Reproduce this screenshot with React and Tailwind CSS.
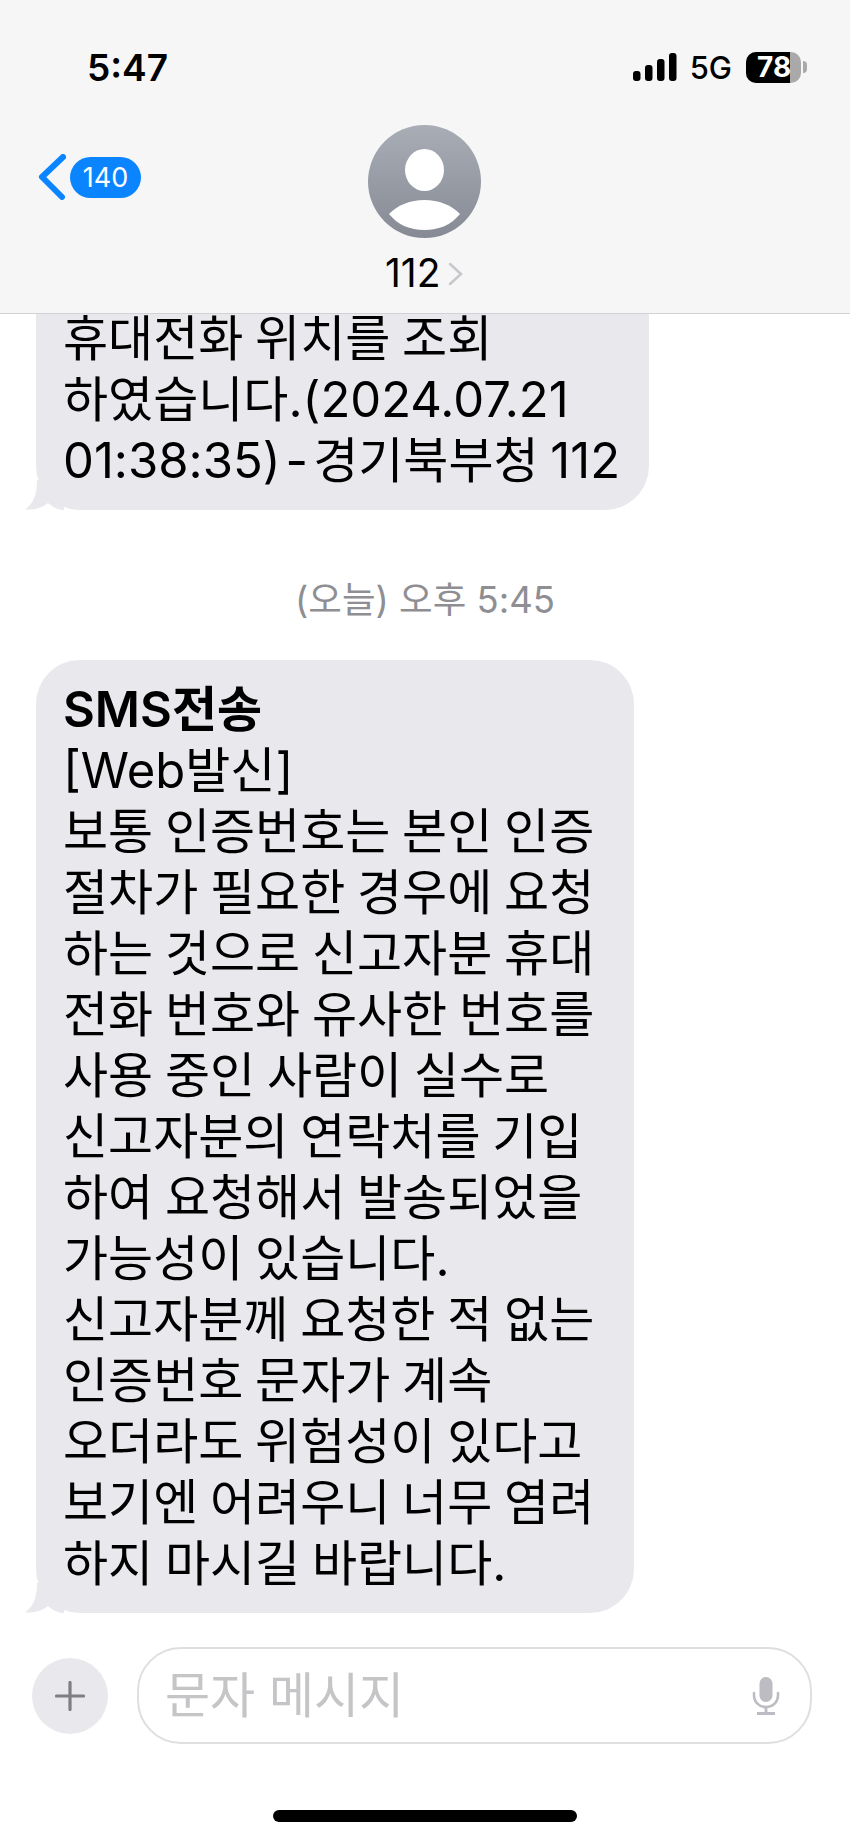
const font = { fontFamily: '"Inter","Noto Sans CJK KR",sans-serif' };

function Tail() {
  return (
    <svg className="absolute left-[-12px] bottom-0" width="40" height="30" viewBox="0 0 40 30">
      <path d="M13 0 C13 14 10 23 1 29.5 C10 30 18 28 24 23 C29 27 33 30 40 30 L40 0 Z" fill="#e9e8ec" />
    </svg>
  );
}

function Bubble({ lines, bold, width, className }) {
  return (
    <div className={`relative ml-[36px] bg-[#e9e8ec] rounded-[44px] pl-[27px] text-black text-[49px] leading-[61px] [word-spacing:-2px] ${width} ${className}`}>
      {bold && <div className="font-semibold whitespace-nowrap">{bold}</div>}
      {lines.map((l, i) => (
        <div key={i} className="whitespace-nowrap">{l}</div>
      ))}
      <Tail />
    </div>
  );
}

function Avatar() {
  return (
    <svg width="113" height="113" viewBox="0 0 113 113">
      <defs>
        <linearGradient id="av" x1="0" y1="0" x2="0" y2="1">
          <stop offset="0" stopColor="#a9adb6" />
          <stop offset="1" stopColor="#868a94" />
        </linearGradient>
      </defs>
      <circle cx="56.5" cy="56.5" r="56.5" fill="url(#av)" />
      <ellipse cx="56.5" cy="45" rx="19.5" ry="21" fill="#fff" />
      <path d="M21 89 C30 80 42 75 56.5 75 C71 75 83 80 92 89 C83 100 71 105 56.5 105 C42 105 30 100 21 89 Z" fill="#fff" />
    </svg>
  );
}

export default function App() {
  return (
    <div style={font} className="w-[850px] h-[1841px] bg-white flex flex-col overflow-hidden">
      <header className="relative h-[314px] shrink-0 bg-[#f6f6f6] border-b border-[#d2d2d4] z-10">
        <div className="flex items-center justify-between h-[134px] pl-[87px] pr-[43px]">
          <span className="text-[37px] font-semibold text-black leading-none">5:47</span>
          <div className="flex items-center">
            <svg width="44" height="28" viewBox="0 0 44 28" fill="#000">
              <rect x="0" y="18" width="7.5" height="10" rx="3" />
              <rect x="12" y="12" width="7.5" height="16" rx="3" />
              <rect x="24" y="6" width="7.5" height="22" rx="3" />
              <rect x="36" y="0" width="7.5" height="28" rx="3" />
            </svg>
            <span className="ml-[13px] text-[31px] font-medium text-black leading-none">5G</span>
            <div className="relative ml-[14px] w-[55px] h-[31px] rounded-[10px] overflow-hidden bg-[#a9a9a9]">
              <div className="h-full w-[44px] bg-black" />
              <span className="absolute left-[11px] top-0 h-full flex items-center text-[28px] font-bold text-white leading-none">78</span>
            </div>
            <div className="ml-[2px] w-[4px] h-[12px] rounded-r-full bg-[#a9a9a9]" />
          </div>
        </div>
        <div className="absolute left-[38px] top-[154px] flex items-center">
          <svg width="28" height="46" viewBox="0 0 28 46" fill="none" stroke="#0a84ff" strokeWidth="6" strokeLinecap="round" strokeLinejoin="round">
            <path d="M25 3 L4 23 L24 43" />
          </svg>
          <div className="ml-[4px] w-[71px] h-[41px] rounded-full bg-[#0a84ff] text-white text-[27px] flex items-center justify-center leading-none">140</div>
        </div>
        <div className="absolute left-[368px] top-[125px]"><Avatar /></div>
        <div className="absolute left-[385px] top-[253px] flex items-center">
          <span className="text-[39px] leading-[40px] text-black">112</span>
          <svg className="ml-[7px] mt-[2px]" width="15" height="24" viewBox="0 0 15 24" fill="none" stroke="#c7c7cc" strokeWidth="2.5" strokeLinecap="round">
            <path d="M2 2 L13 12 L2 22" />
          </svg>
        </div>
      </header>

      <main className="flex-1 overflow-hidden">
        <Bubble
          width="w-[613px]"
          className="-mt-[50px] pt-[44px] pb-[19px]"
          lines={[
            "휴대전화 위치를 조회",
            "하였습니다.(2024.07.21",
            <>01:38:35)<span className="px-[5px]">-</span>경기북부청 112</>,
          ]}
        />
        <div className="mt-[69px] h-[43px] flex items-center justify-center text-[36.5px] text-[#8e8e93] leading-none">(오늘) 오후 5:45</div>
        <Bubble
          width="w-[598px]"
          className="mt-[38px] pt-[19px] pb-[19px]"
          bold="SMS전송"
          lines={[
            "[Web발신]",
            "보통 인증번호는 본인 인증",
            "절차가 필요한 경우에 요청",
            "하는 것으로 신고자분 휴대",
            "전화 번호와 유사한 번호를",
            "사용 중인 사람이 실수로",
            "신고자분의 연락처를 기입",
            "하여 요청해서 발송되었을",
            "가능성이 있습니다.",
            "신고자분께 요청한 적 없는",
            "인증번호 문자가 계속",
            "오더라도 위험성이 있다고",
            "보기엔 어려우니 너무 염려",
            "하지 마시길 바랍니다.",
          ]}
        />
      </main>

      <div className="h-[228px] shrink-0 flex flex-col">
        <div className="flex items-center mt-[34px] pl-[32px] pr-[38px]">
          <div className="w-[76px] h-[76px] rounded-full bg-[#e9e8ec] flex items-center justify-center">
            <svg width="30" height="30" viewBox="0 0 30 30" stroke="#7f7f82" strokeWidth="3.2" strokeLinecap="round">
              <path d="M15 1.5 V28.5 M1.5 15 H28.5" />
            </svg>
          </div>
          <div className="ml-[29px] flex-1 h-[97px] rounded-[44px] border-2 border-[#dfdfe1] flex items-center justify-between pl-[26px] pr-[30px]">
            <span className="text-[49px] text-[#c5c5c7] leading-none">문자 메시지</span>
            <svg width="28" height="38" viewBox="0 0 28 38" fill="none">
              <rect x="7.5" y="0" width="13" height="25" rx="6.5" fill="#bcbcc2" />
              <path d="M2 16 V18 C2 25 7 30 14 30 C21 30 26 25 26 18 V16" stroke="#bcbcc2" strokeWidth="2.6" strokeLinecap="round" />
              <path d="M14 30 V36 M5 36.5 H23" stroke="#bcbcc2" strokeWidth="2.8" />
            </svg>
          </div>
        </div>
        <div className="mt-[66px] mx-auto w-[304px] h-[12px] rounded-full bg-black" />
      </div>
    </div>
  );
}
